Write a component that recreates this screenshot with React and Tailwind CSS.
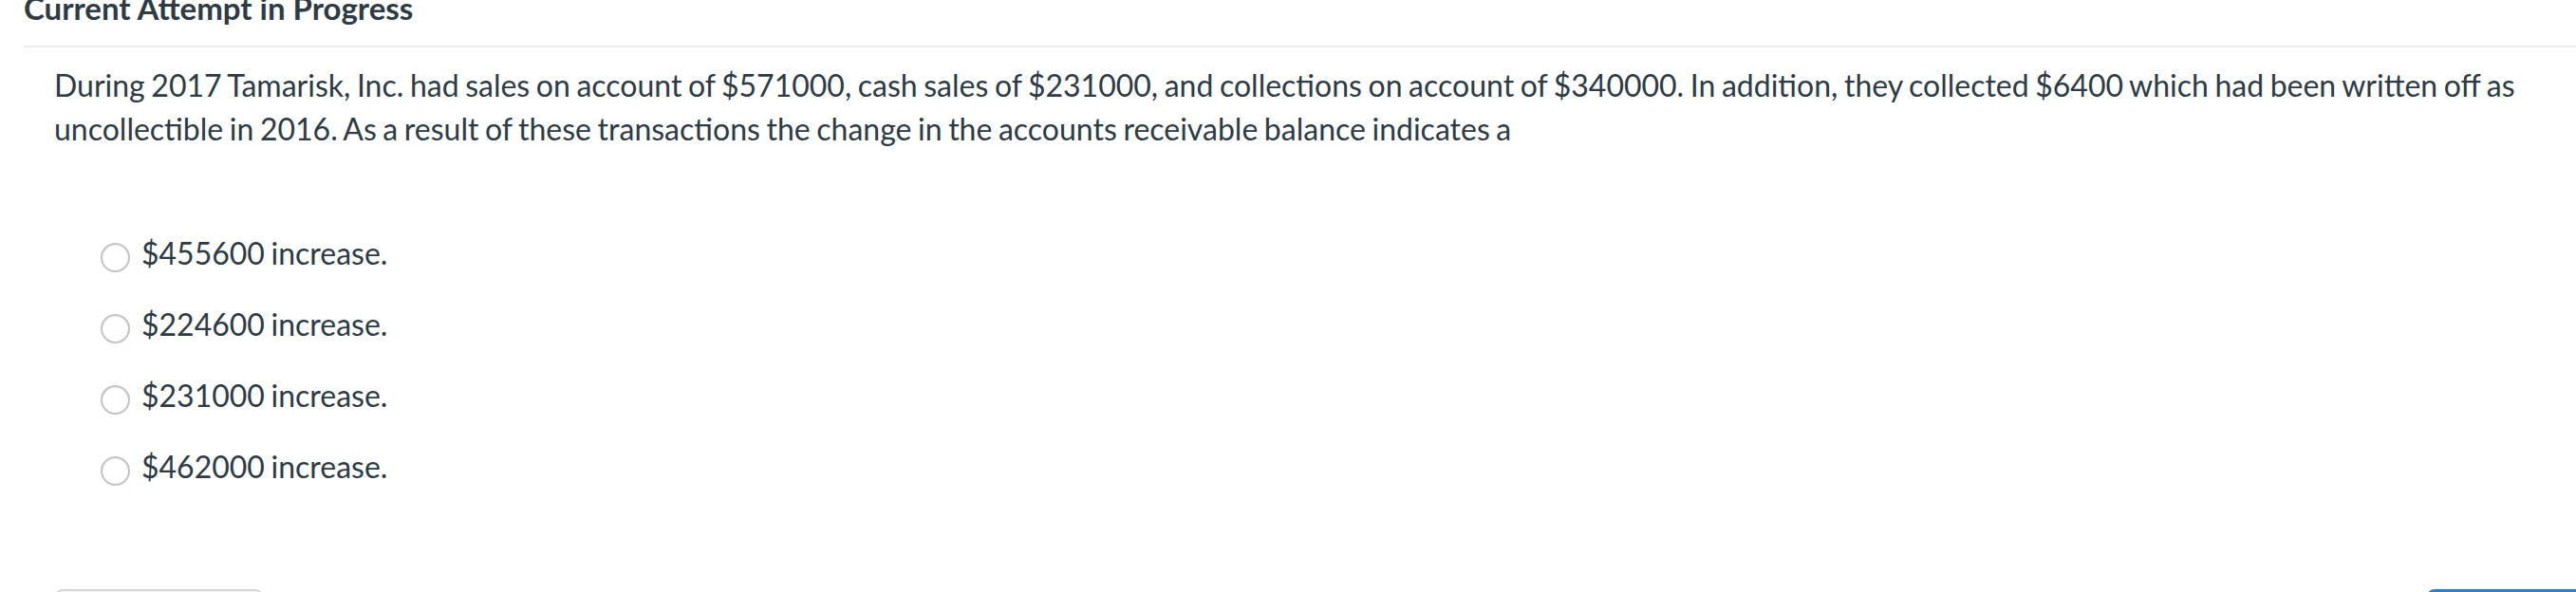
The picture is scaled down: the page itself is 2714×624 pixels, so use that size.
export default function App() {
  const options = [
    "$455600 increase.",
    "$224600 increase.",
    "$231000 increase.",
    "$462000 increase.",
  ];

  return (
    <div className="w-[2714px] h-[624px] overflow-hidden bg-white text-[#2d3b45] font-[Lato,sans-serif]">
      {/* header, title is clipped at the top edge */}
      <div className="ml-[25px] h-[50px] flex flex-col border-b-2 border-[#ececec]">
        <h2 className="-mt-[11px] text-[33px] font-bold leading-[1.2] whitespace-nowrap">Current Attempt in Progress</h2>
      </div>

      {/* question */}
      <div className="pl-[57px] pr-[30px] pt-[17px]">
        <p className="text-[32px] leading-[46px] [word-spacing:-1.6px]">
          During 2017 Tamarisk, Inc. had sales on account of $571000, cash sales of $231000, and collections on
          account of $340000. In addition, they collected $6400 which had been written off as uncollectible in 2016.
          As a result of these transactions the change in the accounts receivable balance indicates a
        </p>

        <div className="mt-[85px] pl-[49px] flex flex-col gap-[29px]">
          {options.map((o) => (
            <label key={o} className="flex items-start gap-[12px] h-[46px]">
              <span className="mt-[12px] w-[31px] h-[31px] rounded-full border-2 border-[#c4c4c4] bg-white shadow-[inset_0_1px_2px_rgba(0,0,0,0.08)]" />
              <span className="text-[32px] leading-[46px] [word-spacing:-1.6px]">{o}</span>
            </label>
          ))}
        </div>
      </div>

      {/* footer buttons */}
      <div className="mt-[106px] flex justify-between pl-[58px]">
        <div className="w-[219px] h-[60px] rounded-[8px] border-2 border-[#d6d6d6] bg-[#f5f5f5]" />
        <div className="w-[157px] h-[60px] rounded-tl-[8px] bg-[#2f7ec8]" />
      </div>
    </div>
  );
}
